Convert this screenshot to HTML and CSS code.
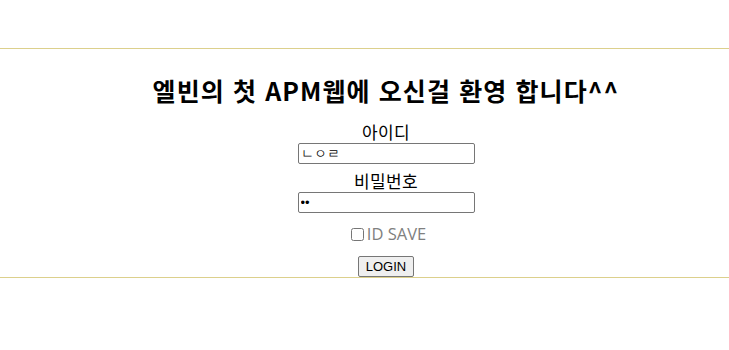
FILE: index.html
```html
<!DOCTYPE html>
<html lang="ko">
<head>
<meta charset="utf-8">
<link rel="stylesheet" href="styles.css">
</head>
<body>
<div class="page">
  <div class="rule"></div>
  <div class="content">
    <h2 class="title">엘빈의 첫 APM웹에 오신걸 환영 합니다^^</h2>
    <form class="login">
      <label class="label" for="uid">아이디</label>
      <input class="field" id="uid" type="text" value="ㄴㅇㄹ">
      <label class="label" for="pw">비밀번호</label>
      <input class="field" id="pw" type="password" value="ab">
      <label class="save"><input class="check" type="checkbox">ID SAVE</label>
      <button class="btn" type="button">LOGIN</button>
    </form>
  </div>
  <div class="rule"></div>
</div>
</body>
</html>
```
FILE: styles.css
```css
html, body {
  margin: 0;
  padding: 0;
  background: #fff;
}
.page {
  padding-top: 48px;
  font-family: "Noto Sans CJK KR", "Noto Sans", sans-serif;
  color: #000;
}
.rule {
  height: 0;
  border-top: 1px solid #dcd08c;
}
.content {
  padding-left: 43px;
  display: flex;
  flex-direction: column;
  align-items: center;
}
.title {
  margin: 23px 0 0;
  font-size: 25px;
  font-weight: 700;
  line-height: 36px;
  letter-spacing: 1.1px;
}
.login {
  margin-top: 13px;
  display: flex;
  flex-direction: column;
  align-items: center;
}
.label {
  font-size: 17px;
  line-height: 22px;
  letter-spacing: 0.4px;
}
.field {
  box-sizing: border-box;
  width: 177px;
  height: 21px;
  margin: 0 0 6px;
  padding: 1px 2px;
  border: 1px solid #767676;
  border-radius: 2px;
  font-family: "Liberation Sans", Arial, sans-serif;
  font-size: 13px;
}
.save {
  display: flex;
  align-items: center;
  margin-top: 5px;
  padding-left: 5px;
  font-family: "Open Sans", sans-serif;
  font-size: 16.5px;
  line-height: 20px;
  color: #808080;
}
.check {
  width: 13px;
  height: 13px;
  margin: 0 3px 0 0;
}
.btn {
  margin-top: 12px;
  height: 21px;
  padding: 1px 7px;
  font-family: "Liberation Sans", Arial, sans-serif;
  font-size: 13px;
  color: #000;
  background: #efefef;
  border: 1px solid #767676;
  border-radius: 2px;
}
```
